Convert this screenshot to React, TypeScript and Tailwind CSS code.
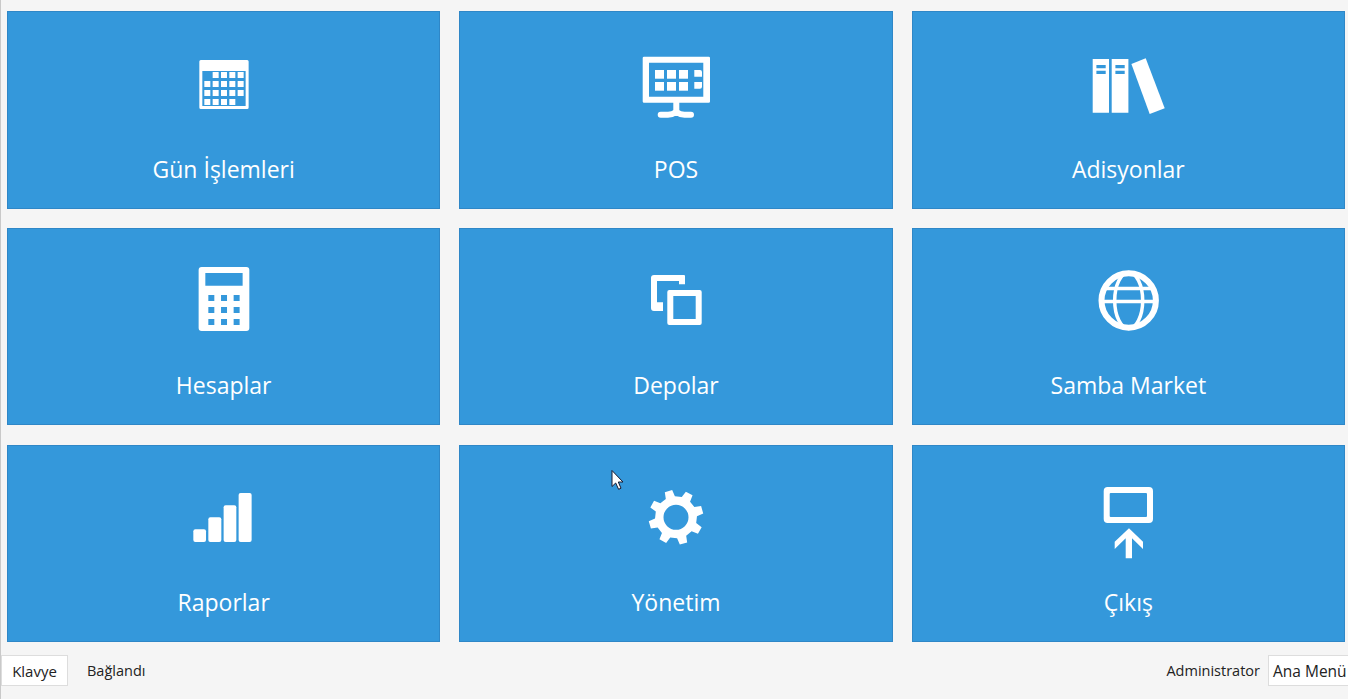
const gearPath = () => {
  const cx = 40;
  const cy = 40.3;
  const pt = (r: number, deg: number) => {
    const a = (deg * Math.PI) / 180;
    return `${(cx + r * Math.sin(a)).toFixed(2)} ${(cy - r * Math.cos(a)).toFixed(2)}`;
  };
  let d = "";
  for (let k = 0; k < 8; k++) {
    const a = -16 + 45 * k;
    d += `${k === 0 ? "M" : "L"}${pt(21, a - 13)} L${pt(27.5, a - 8)} L${pt(27.5, a + 8)} L${pt(21, a + 13)} `;
  }
  d += "Z M52.5 40.3 A12.5 12.5 0 1 0 27.5 40.3 A12.5 12.5 0 1 0 52.5 40.3 Z";
  return d;
};

function Icon({ name, viewBox }: { name: string; viewBox: string }) {
  return (
    <svg viewBox={viewBox} className="w-20 h-20 shrink-0 overflow-visible" fill="#fff">
      {name === "calendar" && (
        <>
          <path
            fillRule="evenodd"
            d="M16.5 17H62.8A1.5 1.5 0 0 1 64.3 18.5V64.5A1.5 1.5 0 0 1 62.8 66H16.5A1.5 1.5 0 0 1 15 64.5V18.5A1.5 1.5 0 0 1 16.5 17ZM18 28V63H61.3V28Z"
          />
          {[
            [1, 2, 3, 4],
            [0, 1, 2, 3, 4],
            [0, 1, 2, 3, 4],
            [0, 1, 2, 3],
          ].map((row, r) =>
            row.map((c) => <rect key={`${r}-${c}`} x={20 + c * 8.33} y={29 + r * 9} width="6" height="6" />),
          )}
        </>
      )}
      {name === "pos" && (
        <>
          <path
            fillRule="evenodd"
            d="M8 13.7H72.7A1.3 1.3 0 0 1 74 15V58.4A1.3 1.3 0 0 1 72.7 59.7H8A1.3 1.3 0 0 1 6.7 58.4V15A1.3 1.3 0 0 1 8 13.7ZM13 19.7V53.7H67.3V19.7Z"
          />
          {[27, 39].map((y) =>
            [19, 31, 43].map((x) => <rect key={`${x}-${y}`} x={x} y={y} width="9" height="8.7" />),
          )}
          <path d="M58.3 27H64A2 2 0 0 1 66 29V33.7H58.3ZM58.3 39H66V43.7A2 2 0 0 1 64 45.7H58.3Z" />
          <rect x="37.3" y="59" width="6" height="10" />
          <path
            d="M24.7 71.7H32Q36 71.7 40.3 68.9Q44.5 71.7 48.5 71.7H55"
            fill="none"
            stroke="#fff"
            strokeWidth="6"
            strokeLinecap="round"
          />
        </>
      )}
      {name === "books" && (
        <>
          <path fillRule="evenodd" d="M4 16H20.3V69.7H4ZM7.7 22V25.3H17V22ZM7.7 27.7V31H17V27.7Z" />
          <path fillRule="evenodd" d="M23 16H39.7V69.7H23ZM26.7 22V25.3H36V22ZM26.7 27.7V31H36V27.7Z" />
          <polygon points="42.7,21 57,15.3 76,65.3 61,71" />
        </>
      )}
      {name === "calculator" && (
        <path
          fillRule="evenodd"
          d="M17.3 7H62A3 3 0 0 1 65 10V68A3 3 0 0 1 62 71H17.3A3 3 0 0 1 14.3 68V10A3 3 0 0 1 17.3 7ZM21 13V25.7H58.3V13ZM24 35V41H30V35ZM36.7 35V41H42.7V35ZM49.3 35V41H55.3V35ZM24 47V53H30V47ZM36.7 47V53H42.7V47ZM49.3 47V53H55.3V47ZM24 59V65H30V59ZM36.7 59V65H42.7V59ZM49.3 59V65H55.3V59Z"
        />
      )}
      {name === "copy" && (
        <>
          <path d="M18 15H48A1 1 0 0 1 49 16V24.3H43V21H21V42.3H27V51H18A3 3 0 0 1 15 48V18A3 3 0 0 1 18 15Z" />
          <path
            fillRule="evenodd"
            d="M33.3 30H63.7A2 2 0 0 1 65.7 32V63A2 2 0 0 1 63.7 65H33.3A2 2 0 0 1 31.3 63V32A2 2 0 0 1 33.3 30ZM37.3 36V59H59.7V36Z"
          />
        </>
      )}
      {name === "globe" && (
        <g fill="none" stroke="#fff">
          <circle cx="40" cy="40.5" r="27.2" strokeWidth="6" />
          <ellipse cx="40" cy="40.5" rx="14" ry="28" strokeWidth="3.5" />
          <path d="M14 28.5H66M13 41.5H67" strokeWidth="3.5" />
        </g>
      )}
      {name === "bars" && (
        <>
          <rect x="9" y="52.3" width="12.7" height="12.7" rx="2" />
          <rect x="24" y="40.3" width="13" height="24.7" rx="2" />
          <rect x="39.3" y="28.3" width="12.7" height="36.7" rx="2" />
          <rect x="54.3" y="16" width="13" height="49" rx="2" />
        </>
      )}
      {name === "gear" && <path fillRule="evenodd" d={gearPath()} />}
      {name === "exit" && (
        <>
          <path
            fillRule="evenodd"
            d="M19 10H60.3A4 4 0 0 1 64.3 14V42A4 4 0 0 1 60.3 46H19A4 4 0 0 1 15 42V14A4 4 0 0 1 19 10ZM22 16A1 1 0 0 0 21 17V39A1 1 0 0 0 22 40H57.3A1 1 0 0 0 58.3 39V17A1 1 0 0 0 57.3 16Z"
          />
          <polygon points="40.3,51.3 54.3,64.7 54.3,72 43.3,61.3 43.3,81.3 37,81.3 37,61.3 26,72 26,64.7" />
        </>
      )}
    </svg>
  );
}

const TILES = [
  { label: "Gün İşlemleri", icon: "calendar", viewBox: "-0.33 0 80 80" },
  { label: "POS", icon: "pos", viewBox: "0 0 80 80" },
  { label: "Adisyonlar", icon: "books", viewBox: "-0.7 0 80 80" },
  { label: "Hesaplar", icon: "calculator", viewBox: "-0.33 0 80 80" },
  { label: "Depolar", icon: "copy", viewBox: "0 0 80 80" },
  { label: "Samba Market", icon: "globe", viewBox: "-0.7 0 80 80" },
  { label: "Raporlar", icon: "bars", viewBox: "-0.33 0 80 80" },
  { label: "Yönetim", icon: "gear", viewBox: "0 0 80 80" },
  { label: "Çıkış", icon: "exit", viewBox: "-0.7 0 80 80" },
];

export default function App() {
  return (
    <div className="relative flex h-[699px] w-[1348px] flex-col overflow-hidden border-l border-[#c9c9c9] bg-[#f5f5f5] font-['Open_Sans',sans-serif]">
      <div className="grid h-[642px] grid-cols-3 grid-rows-[197.6px_197.4px_197px] gap-x-[19px] gap-y-[19.4px] pt-[11px] pr-[3px] pl-[6px]">
        {TILES.map((tile) => (
          <button
            key={tile.label}
            className="flex flex-col items-center justify-between border border-[#2f87c7] bg-[#3498db] pt-[31px] pb-[23px] text-white"
          >
            <Icon name={tile.icon} viewBox={tile.viewBox} />
            <span className="text-[23px] leading-[32px]">{tile.label}</span>
          </button>
        ))}
      </div>

      <div className="flex flex-1 items-start justify-between pt-[13px] text-[#222]">
        <div className="flex items-center">
          <button className="h-[31px] w-[67px] border border-[#ddd] bg-white pt-[1px] text-[15px]">Klavye</button>
          <span className="ml-[19px] text-[14.5px]">Bağlandı</span>
        </div>
        <div className="-mr-[20px] flex items-center">
          <span className="text-[14.5px]">Administrator</span>
          <button className="ml-[8px] h-[31px] w-[100px] border border-[#ddd] bg-white pt-[2px] pl-[4px] text-left text-[15.5px]">
            Ana Menü
          </button>
        </div>
      </div>

      {/* mouse cursor caught in the screenshot */}
      <svg viewBox="0 0 13 20" className="absolute top-[470px] left-[610px] h-5 w-[13px]">
        <polygon
          points="1,0.5 1,16.5 4.7,13 7.6,19.3 10,18.2 7.3,12 12,12"
          fill="#fff"
          stroke="#1a1a2e"
          strokeWidth="1"
        />
      </svg>
    </div>
  );
}
